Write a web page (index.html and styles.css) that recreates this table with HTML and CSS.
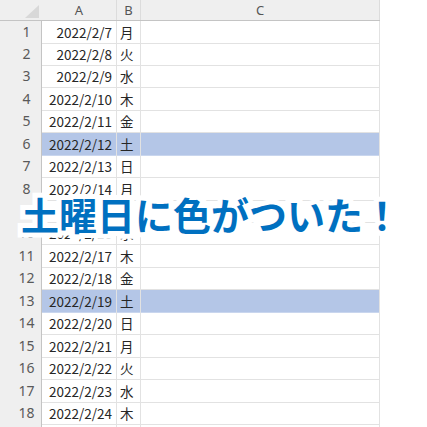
FILE: index.html
```html
<!DOCTYPE html>
<html lang="ja">
<head>
    <meta charset="UTF-8">
    <meta name="viewport" content="width=device-width, initial-scale=1.0">
    <title>土曜日に色がついた</title>
    <link rel="stylesheet" href="styles.css">
</head>
<body>

<div class="sheet">
    <div class="row head">
        <div class="rh corner"><span class="tri"></span></div>
        <div class="ch">A</div>
        <div class="ch">B</div>
        <div class="ch">C</div>
    </div>
    <div class="row"><div class="rh">1</div><div class="cell date">2022/2/7</div><div class="cell day">月</div><div class="cell"></div></div>
    <div class="row"><div class="rh">2</div><div class="cell date">2022/2/8</div><div class="cell day">火</div><div class="cell"></div></div>
    <div class="row"><div class="rh">3</div><div class="cell date">2022/2/9</div><div class="cell day">水</div><div class="cell"></div></div>
    <div class="row"><div class="rh">4</div><div class="cell date">2022/2/10</div><div class="cell day">木</div><div class="cell"></div></div>
    <div class="row"><div class="rh">5</div><div class="cell date">2022/2/11</div><div class="cell day">金</div><div class="cell"></div></div>
    <div class="row sat"><div class="rh">6</div><div class="cell date">2022/2/12</div><div class="cell day">土</div><div class="cell"></div></div>
    <div class="row"><div class="rh">7</div><div class="cell date">2022/2/13</div><div class="cell day">日</div><div class="cell"></div></div>
    <div class="row"><div class="rh">8</div><div class="cell date">2022/2/14</div><div class="cell day">月</div><div class="cell"></div></div>
    <div class="row"><div class="rh">9</div><div class="cell date">2022/2/15</div><div class="cell day">火</div><div class="cell"></div></div>
    <div class="row"><div class="rh">10</div><div class="cell date">2022/2/16</div><div class="cell day">水</div><div class="cell"></div></div>
    <div class="row"><div class="rh">11</div><div class="cell date">2022/2/17</div><div class="cell day">木</div><div class="cell"></div></div>
    <div class="row"><div class="rh">12</div><div class="cell date">2022/2/18</div><div class="cell day">金</div><div class="cell"></div></div>
    <div class="row sat"><div class="rh">13</div><div class="cell date">2022/2/19</div><div class="cell day">土</div><div class="cell"></div></div>
    <div class="row"><div class="rh">14</div><div class="cell date">2022/2/20</div><div class="cell day">日</div><div class="cell"></div></div>
    <div class="row"><div class="rh">15</div><div class="cell date">2022/2/21</div><div class="cell day">月</div><div class="cell"></div></div>
    <div class="row"><div class="rh">16</div><div class="cell date">2022/2/22</div><div class="cell day">火</div><div class="cell"></div></div>
    <div class="row"><div class="rh">17</div><div class="cell date">2022/2/23</div><div class="cell day">水</div><div class="cell"></div></div>
    <div class="row"><div class="rh">18</div><div class="cell date">2022/2/24</div><div class="cell day">木</div><div class="cell"></div></div>
    <div class="row"><div class="rh"></div><div class="cell"></div><div class="cell"></div><div class="cell"></div></div>
</div>

<div class="caption">土曜日に色がついた！</div>

</body>
</html>
```

FILE: styles.css
```css
body {
    margin: 0;
    padding: 0;
    width: 427px;
    height: 427px;
    overflow: hidden;
    background: #fff;
    position: relative;
    font-family: "Noto Sans CJK JP", "Noto Sans", sans-serif;
}
.sheet {
    display: flex;
    flex-direction: column;
}
.row {
    display: grid;
    grid-template-columns: 42px 75px 24px 239px;
    height: 22.45px;
    font-size: 13.5px;
    color: #262626;
}
.row.head {
    height: 20.5px;
    background: #efefef;
    width: 380px;
    box-sizing: border-box;
    border-bottom: 1px solid #c4c4c4;
}
.ch {
    text-align: center;
    font-family: "Noto Sans", sans-serif;
    font-size: 13px;
    line-height: 20px;
    color: #555;
    border-right: 1px solid #dcdcdc;
}
.rh {
    background: #efefef;
    border-right: 1px solid #c4c4c4;
    box-sizing: border-box;
    padding-left: 12px;
    text-align: center;
    color: #595959;
    font-size: 14px;
    line-height: 22px;
    font-family: "Noto Sans", sans-serif;
}
.corner {
    position: relative;
    border-right: none;
}
.tri {
    position: absolute;
    left: 25px;
    top: 5px;
    width: 14px;
    height: 13px;
    background: #d8d8d8;
    clip-path: polygon(100% 0, 100% 100%, 0 100%);
}
.cell {
    border-right: 1px solid #e2e2e2;
    border-bottom: 1px solid #e2e2e2;
    line-height: 22px;
    white-space: nowrap;
}
.date {
    text-align: right;
    padding-right: 4px;
}
.day {
    padding-left: 3px;
}
.sat .cell {
    background: #b4c6e7;
    border-bottom-color: #c9d6ee;
}
.caption {
    position: absolute;
    left: 21px;
    top: 188px;
    font-size: 38px;
    font-weight: 700;
    line-height: 52px;
    color: #0070c0;
    white-space: nowrap;
    -webkit-text-stroke: 10px #fff;
    paint-order: stroke fill;
}
```
